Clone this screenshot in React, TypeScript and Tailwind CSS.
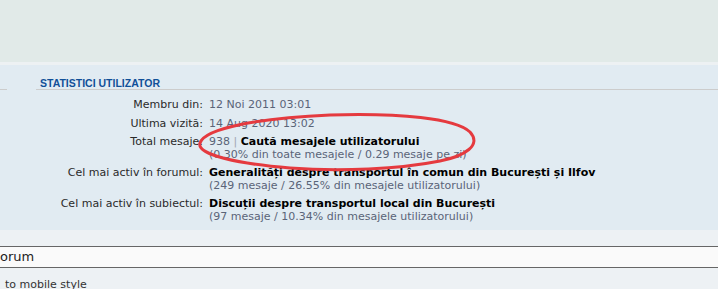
export default function App() {
  const rows: { label: string; lines: React.ReactNode[] }[] = [
    { label: "Membru din:", lines: [<span className="text-[#5a6478]">12 Noi 2011 03:01</span>] },
    { label: "Ultima vizită:", lines: [<span className="text-[#5a6478]">14 Aug 2020 13:02</span>] },
    {
      label: "Total mesaje:",
      lines: [
        <span>
          <span className="text-[#5a6478]">938</span> <span className="text-[#a0a6b0]">|</span>{" "}
          <span className="font-bold text-black">Caută mesajele utilizatorului</span>
        </span>,
        <span className="text-[#5a6478]">(0.30% din toate mesajele / 0.29 mesaje pe zi)</span>,
      ],
    },
    {
      label: "Cel mai activ în forumul:",
      lines: [
        <span className="font-bold text-black">Generalități despre transportul în comun din București și Ilfov</span>,
        <span className="text-[#5a6478]">(249 mesaje / 26.55% din mesajele utilizatorului)</span>,
      ],
    },
    {
      label: "Cel mai activ în subiectul:",
      lines: [
        <span className="font-bold text-black">Discuții despre transportul local din București</span>,
        <span className="text-[#5a6478]">(97 mesaje / 10.34% din mesajele utilizatorului)</span>,
      ],
    },
  ];

  return (
    <div className="w-[718px] h-[289px] overflow-hidden bg-[#edf1f4] text-[#2a2a2a] font-['DejaVu_Sans',Verdana,sans-serif]">
      <div className="h-[62px] bg-[#e1eae8]" />
      <div className="h-[3px] bg-[#edf1f3]" />
      <div className="relative h-[165px] bg-[#e1ebf2] flex pt-[12px]">
        <div className="w-[7px] h-[13px] border-b border-[#cccccc]" />
        <div className="ml-[29px] flex-1 min-w-0">
          <h3 className="h-[13px] border-b border-[#cccccc] pl-[4px] text-[10.5px] leading-[12px] font-bold uppercase text-[#115098] font-['Liberation_Sans',Arial,sans-serif]">
            Statistici utilizator
          </h3>
          <dl className="mt-[9px] flex flex-col gap-[6px] text-[11px] leading-[12.5px]">
            {rows.map((r) => (
              <div key={r.label} className="flex gap-[6px]">
                <dt className="w-[167px] shrink-0 text-right whitespace-nowrap">{r.label}</dt>
                <dd className="flex flex-col whitespace-nowrap">
                  {r.lines.map((l, i) => (
                    <div key={i}>{l}</div>
                  ))}
                </dd>
              </div>
            ))}
          </dl>
        </div>
        <svg
          className="absolute left-0 top-0 pointer-events-none"
          width="718"
          height="165"
          viewBox="0 0 718 165"
        >
          <path
            d="M 200 78 C 205 63, 260 53, 330 50 C 400 48, 455 53, 470 67 C 482 80, 465 91, 440 96 C 400 104, 340 107, 290 103 C 240 99, 196 90, 200 78 Z"
            fill="none"
            stroke="#e53a3f"
            strokeWidth="3"
          />
        </svg>
      </div>
      <div className="h-[16px]" />
      <div className="h-[22px] border-y border-[#666666] bg-[#fafafa] text-[13px] leading-[20px] text-[#222]">
        orum
      </div>
      <div className="mt-[11px] pl-[5px] text-[11px] leading-[12px] text-[#333]">to mobile style</div>
    </div>
  );
}
